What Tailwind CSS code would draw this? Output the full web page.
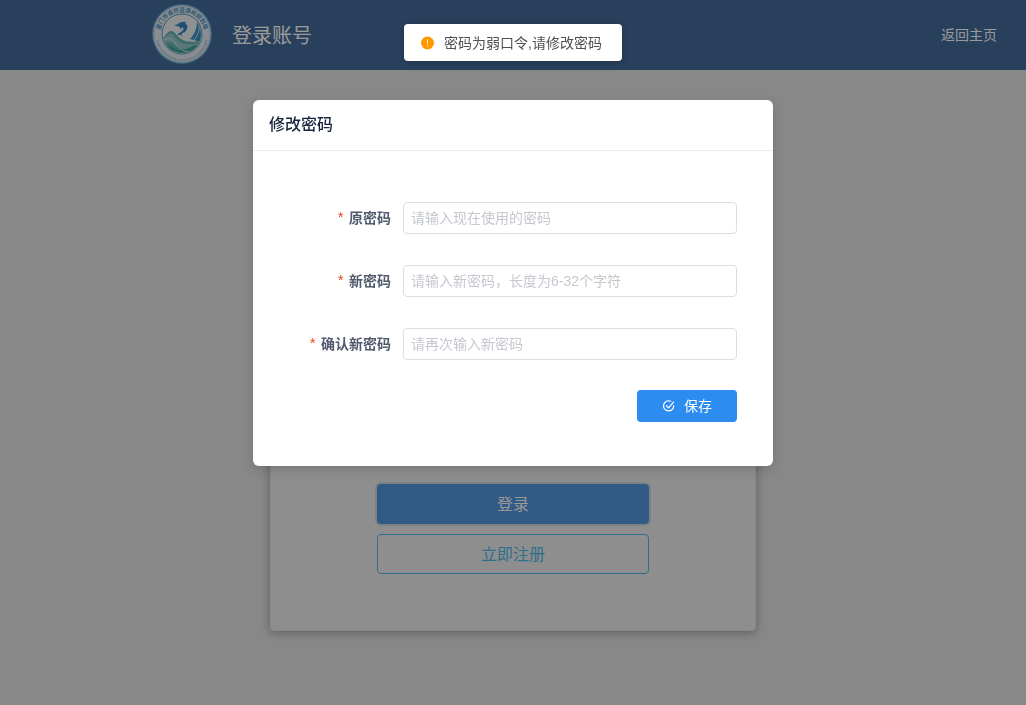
<!DOCTYPE html>
<html lang="zh-CN">
<head>
    <meta charset="UTF-8">
    <meta name="viewport" content="width=device-width, initial-scale=1.0">
    <title>登录账号</title>
    <script src="https://cdn.jsdelivr.net/npm/@tailwindcss/browser@4"></script>
</head>
<body class="min-h-screen flex flex-col bg-[#e3e3e3] text-sm font-['Liberation_Sans','Noto_Sans_CJK_SC',sans-serif]">

    <!-- Header -->
    <header class="h-[70px] pl-[152px] pr-[29px] flex items-center justify-between bg-[#436b99] text-white">
        <div class="mb-0.5 flex items-start gap-5">
            <svg class="size-[60px]" viewBox="0 0 60 60" role="img" aria-label="logo">
                <defs>
                    <path id="ring-top" d="M8.500 36 A22.300 22.300 0 1 1 51.500 36"/>
                    <clipPath id="disc"><circle cx="30" cy="30" r="19"/></clipPath>
                </defs>
                <circle cx="30" cy="30" r="30" fill="#5c9fcc"/>
                <circle cx="30" cy="30" r="28.800" fill="#e6ebee"/>
                <circle cx="30" cy="30" r="27.800" fill="none" stroke="#9cc4de" stroke-width="0.500"/>
                <text fill="#4a93c4" font-size="5.600" font-weight="700"><textPath href="#ring-top" startOffset="50%" text-anchor="middle">厦门市自然资源和规划局</textPath></text>
                <path d="M5.500 36 A25 25 0 0 0 54.500 36" fill="none" stroke="#8ab8d6" stroke-width="1.600" stroke-dasharray="0.900 0.700"/>
                <circle cx="30" cy="30" r="20" fill="#eef0f0" stroke="#5a9cc8" stroke-width="1"/>
                <g clip-path="url(#disc)">
                    <path d="M44.500 13c1.500 8-.5 16-6.500 22l11 3V20z" fill="#3d8fc4"/>
                    <path d="M47 18c1 7-.5 13-5 18" fill="none" stroke="#e6ebee" stroke-width="0.900"/>
                    <path d="M9 35c4-1 5-7 9.500-8 4.500 0 6 5 10.500 8 7 4 14 3 22 1v18H9z" fill="#66b4ad"/>
                    <path d="M11 33c4-1 6-4 8-3.500 3 1 4 5 9 8.500 6 3 14 3 22 0v5c-11 3-20 3-26-1-5-5-8-5-13-2z" fill="#94c6c6"/>
                    <path d="M10 42c7-3 11 3 18 4s13-6 22-6v13H10z" fill="#3da18d"/>
                    <path d="M11 37c6-5 10-2 13 3 4 6 9 8 16 8" fill="none" stroke="#e9f1ef" stroke-width="0.800"/>
                </g>
                <!-- dolphin -->
                <path d="M22.500 21.200c1.500-.8 2.400-.8 3.500-.8 1.200-1.900 3-2.700 5-2.300 1.100-.5 2-.5 3-.2l-.9 1.200c2.600 1.900 2.900 5 .9 7.700-1 1.300-2.800 2.300-4.700 2.500.8.700 1 1.500.7 2.500l-2-1.300-2.500 1.300c.1-1.600 1-2.800 2.600-3.400 2.500-.9 4.100-3.200 2.900-5.200-1.200.3-2 .9-2.500 1.900-.8-.7-.9-1.400-.6-2.300-1.900-.6-3.500-.7-5.400-1.600z" fill="#3185bf"/>
            </svg>
            <h1 class="pt-[18px] text-xl leading-7">登录账号</h1>
        </div>
        <a href="#">返回主页</a>
    </header>

    <!-- Login card, behind the dialog -->
    <main class="flex-1 flex flex-col items-center pt-[50px]">
        <section class="w-[486px] max-w-full px-[106px] pt-[364px] pb-14 flex flex-col gap-2.5 rounded border border-[#e3e3e3] bg-[#ededed] shadow-[0_2px_10px_rgba(0,0,0,0.3)] -mt-px">
            <button type="button" class="h-10 pt-px rounded bg-[#5396df] text-base text-white ring-2 ring-[#2d5c9f]/15">登录</button>
            <button type="button" class="h-10 pt-px rounded border border-[#4bb9e8] text-base text-[#4bb9e8]">立即注册</button>
        </section>
    </main>

    <div class="fixed inset-0 bg-black/40"></div>

    <!-- Change password dialog -->
    <div role="dialog" aria-labelledby="dialog-title" class="absolute top-[100px] inset-x-0 mx-auto w-[520px] max-w-full rounded-md bg-white shadow-[0_4px_12px_rgba(0,0,0,0.15)]">
        <div class="px-4 py-3 border-b border-[#e8eaec]">
            <h2 id="dialog-title" class="text-base leading-[26px] font-medium text-[#17233d]">修改密码</h2>
        </div>
        <form class="pl-4 pr-9 pt-[51px] pb-11 flex flex-col gap-[30px]">
            <div class="flex flex-col gap-[31px]">
                <div class="flex items-center gap-3">
                    <label for="old-password" class="w-[122px] text-right font-bold text-[#515a6e]"><span class="mr-1 font-['Liberation_Mono',monospace] font-normal text-[#ed4014]">*</span>原密码</label>
                    <input id="old-password" type="password" placeholder="请输入现在使用的密码" class="flex-1 h-8 px-[7px] rounded border border-[#dcdee2] text-[#515a6e] placeholder:text-[#c5c8ce]">
                </div>
                <div class="flex items-center gap-3">
                    <label for="new-password" class="w-[122px] text-right font-bold text-[#515a6e]"><span class="mr-1 font-['Liberation_Mono',monospace] font-normal text-[#ed4014]">*</span>新密码</label>
                    <input id="new-password" type="password" placeholder="请输入新密码，长度为6-32个字符" class="flex-1 h-8 px-[7px] rounded border border-[#dcdee2] text-[#515a6e] placeholder:text-[#c5c8ce]">
                </div>
                <div class="flex items-center gap-3">
                    <label for="confirm-password" class="w-[122px] text-right font-bold text-[#515a6e]"><span class="mr-1 font-['Liberation_Mono',monospace] font-normal text-[#ed4014]">*</span>确认新密码</label>
                    <input id="confirm-password" type="password" placeholder="请再次输入新密码" class="flex-1 h-8 px-[7px] rounded border border-[#dcdee2] text-[#515a6e] placeholder:text-[#c5c8ce]">
                </div>
            </div>
            <button type="submit" class="self-end w-[100px] h-8 flex items-center justify-center gap-2 rounded bg-[#2d8cf0] text-white">
                <svg class="size-[14px]" viewBox="0 0 14 14" fill="none" stroke="currentColor" stroke-width="1.200" stroke-linecap="round" stroke-linejoin="round">
                    <path d="M11.700 6.500A5.100 5.100 0 1 1 8.700 2.200"/>
                    <path d="M4.300 6.600l2.200 2.200 5-5.700"/>
                </svg>
                保存
            </button>
        </form>
    </div>

    <!-- Message -->
    <div class="absolute top-6 inset-x-0 flex justify-center">
        <div role="alert" class="h-[37px] pl-4 pr-5 flex items-center gap-2 rounded bg-white text-[#515151] shadow-[0_1px_6px_rgba(0,0,0,0.2)]">
            <svg class="size-4" viewBox="0 0 16 16">
                <circle cx="7.500" cy="8" r="6.500" fill="#ff9900"/>
                <path d="M7.500 4.800v4" stroke="#fff" stroke-width="0.800" stroke-linecap="round"/>
                <circle cx="7.500" cy="10.800" r="0.600" fill="#fff"/>
            </svg>
            <span>密码为弱口令,请修改密码</span>
        </div>
    </div>

</body>
</html>
